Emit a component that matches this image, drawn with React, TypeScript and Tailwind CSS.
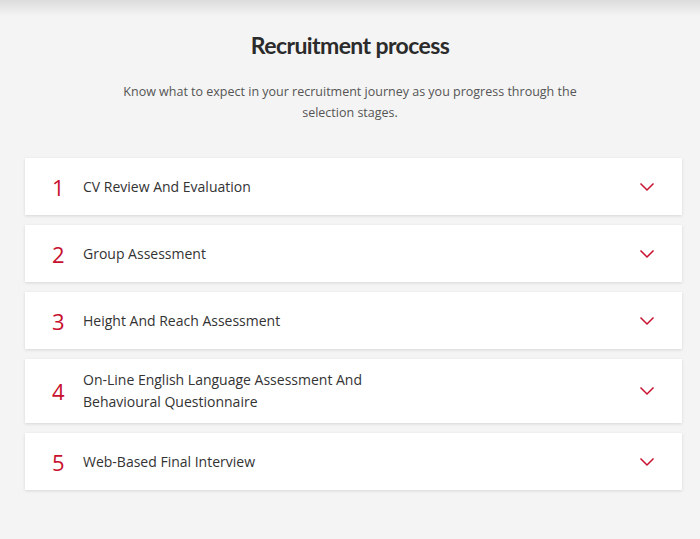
import React from "react";

const steps = [
  "CV Review And Evaluation",
  "Group Assessment",
  "Height And Reach Assessment",
  "On-Line English Language Assessment And Behavioural Questionnaire",
  "Web-Based Final Interview",
];

function Chevron() {
  return (
    <svg width="16" height="10" viewBox="0 0 16 10" fill="none" className="shrink-0">
      <path d="M1.5 1.5 L8 8 L14.5 1.5" stroke="#c8102e" strokeWidth="1.5" />
    </svg>
  );
}

export default function App() {
  return (
    <div className="relative min-h-[539px] w-full bg-[#f4f4f4] font-['Open_Sans',sans-serif]">
      {/* top shadow strip */}
      <div className="absolute inset-x-0 top-0 h-4 bg-gradient-to-b from-[#dcdcdc] to-[#f4f4f4]" />

      <div className="relative pt-[29px]">
        <h1 className="text-center font-['Lato',sans-serif] text-[23px] font-bold leading-8 tracking-[-0.6px] text-[#2b2b2b]">
          Recruitment process
        </h1>
        <p className="mx-auto mt-[20px] max-w-[460px] text-center text-[12.5px] leading-[21px] text-[#555]">
          Know what to expect in your recruitment journey as you progress through the selection stages.
        </p>

        <div className="mx-[25px] mt-[35px] flex w-[657px] flex-col gap-[10px]">
          {steps.map((label, i) => (
            <div
              key={label}
              className="flex min-h-[57px] items-center bg-white py-[10px] pl-[27px] pr-[27px] shadow-[0_1px_3px_rgba(0,0,0,0.12)]"
            >
              <span className="w-[31px] shrink-0 text-[22px] leading-none text-[#c8102e]">{i + 1}</span>
              <span className="w-[300px] shrink-0 text-[14px] leading-[22px] text-[#333]">{label}</span>
              <span className="flex-1" />
              <Chevron />
            </div>
          ))}
        </div>
      </div>
    </div>
  );
}
